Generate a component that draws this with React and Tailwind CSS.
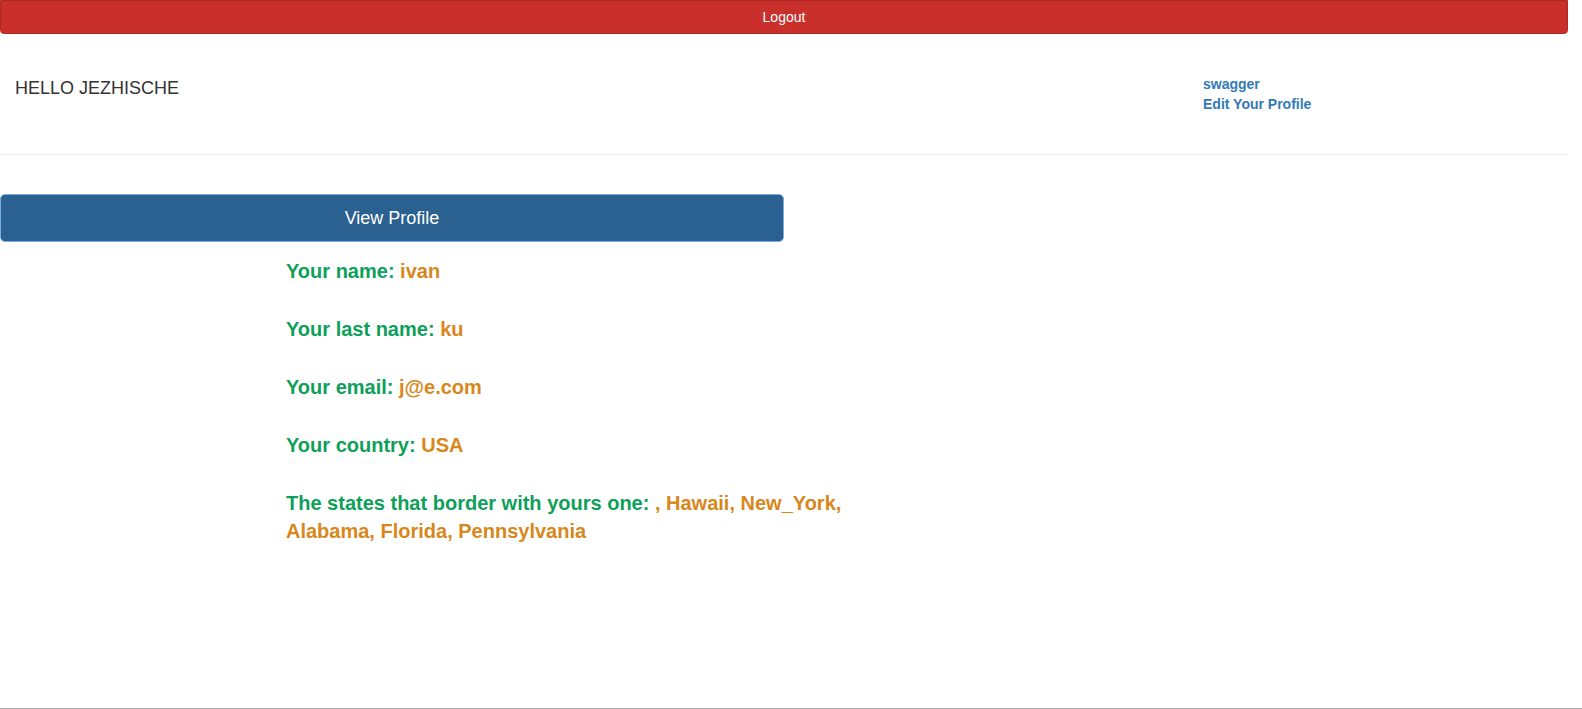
export default function App() {
  const font = { fontFamily: '"Liberation Sans", Arial, sans-serif' };
  const rows = [
    ['Your name: ', 'ivan'],
    ['Your last name: ', 'ku'],
    ['Your email: ', 'j@e.com'],
    ['Your country: ', 'USA'],
    ['The states that border with yours one: ', ', Hawaii, New_York, Alabama, Florida, Pennsylvania'],
  ];

  return (
    <div style={font} className="h-[709px] w-[1582px] bg-white border-b border-[#a8a8a8] overflow-hidden">
      <div className="w-[1568px]">
        {/* Logout bar */}
        <button className="w-full h-[34px] bg-[#c9302c] border border-[#ac2925] rounded-b-[4px] text-white text-[14px] leading-[20px] flex items-center justify-center">
          Logout
        </button>

        {/* Header */}
        <div className="h-[121px] flex border-b border-[#eeeeee]">
          <div className="flex-1 pl-[15px] pt-[43px] text-[18px] leading-[22px] text-[#333]">HELLO JEZHISCHE</div>
          <div className="w-[365px] pt-[40px] flex flex-col text-[14px] leading-[20px] font-bold text-[#337ab7]">
            <a href="#">swagger</a>
            <a href="#">Edit Your Profile</a>
          </div>
        </div>

        {/* View profile */}
        <div className="pt-[39px]">
          <button className="w-[784px] h-[48px] bg-[#2a6190] border border-[#7fa8e6] rounded-[5px] text-white text-[18px] flex items-center justify-center">
            View Profile
          </button>
        </div>

        <div className="ml-[286px] w-[600px] mt-[15px] flex flex-col gap-[30px] text-[20px] leading-[28px] font-bold">
          {rows.map(([label, value]) => (
            <div key={label}>
              <span className="text-[#0e9f5b]">{label}</span>
              <span className="text-[#d8871b]">{value}</span>
            </div>
          ))}
        </div>
      </div>
    </div>
  );
}
